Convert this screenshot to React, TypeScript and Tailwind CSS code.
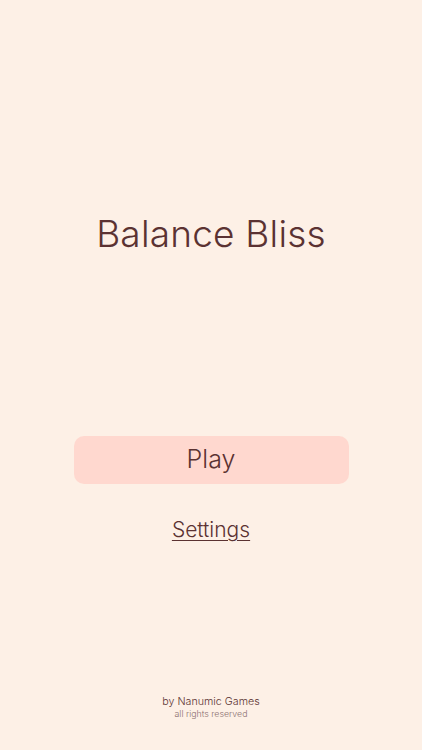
import React from 'react';

export default function App() {
  return (
    <div
      className="flex h-[750px] w-full flex-col items-center bg-[#fdf0e6] text-[#5b3232]"
      style={{ fontFamily: 'Inter, "Noto Sans", sans-serif' }}
    >
      <h1 className="mt-[206px] text-[37px] leading-[56px] font-light tracking-[0.2px]">Balance Bliss</h1>

      <button
        type="button"
        className="mt-[174px] h-[48px] w-[275px] rounded-[10px] bg-[#ffd8cf] text-[25px] font-light"
      >
        Play
      </button>

      <a href="#" className="mt-[30px] text-[21px] font-light underline underline-offset-[3px] decoration-1">
        Settings
      </a>

      <div className="mt-auto mb-[30px] flex flex-col items-center">
        <p className="text-[10.7px] leading-[13px] font-light">by Nanumic Games</p>
        <p className="text-[8.8px] leading-[12px] font-light text-[#8a6e6e]">all rights reserved</p>
      </div>
    </div>
  );
}
